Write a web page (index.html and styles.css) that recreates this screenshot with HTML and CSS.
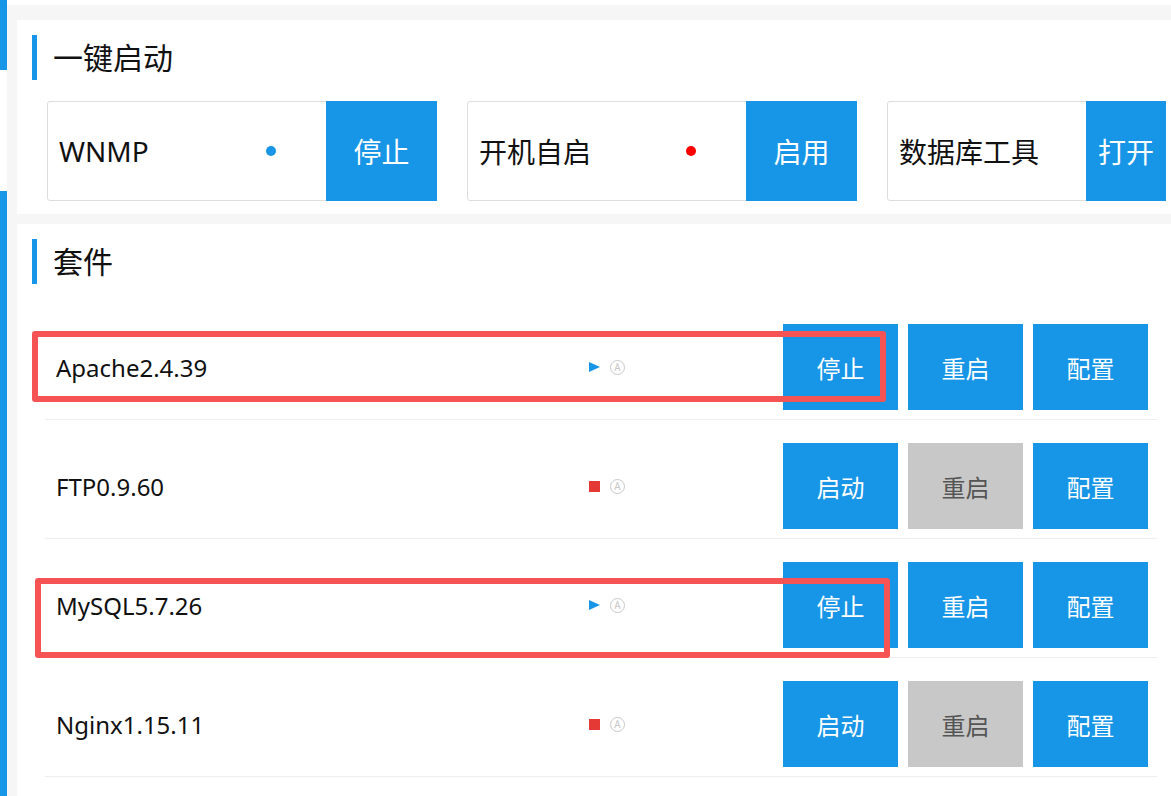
FILE: index.html
```html
<!DOCTYPE html>
<html lang="zh-CN">
<head>
<meta charset="utf-8">
<title>WNMP</title>
<link rel="stylesheet" href="styles.css">
</head>
<body>
<div class="sidebar">
  <div class="side-active side-top"></div>
  <div class="side-gap"></div>
  <div class="side-active side-rest"></div>
</div>
<main class="main">
  <section class="panel panel-quick">
    <h2 class="panel-title">一键启动</h2>
    <div class="cards">
      <div class="card">
        <span class="card-label">WNMP</span>
        <span class="dot dot-on"></span>
        <button class="card-btn">停止</button>
      </div>
      <div class="card">
        <span class="card-label">开机自启</span>
        <span class="dot dot-off"></span>
        <button class="card-btn">启用</button>
      </div>
      <div class="card card-narrow">
        <span class="card-label">数据库工具</span>
        <button class="card-btn card-btn-narrow">打开</button>
      </div>
    </div>
  </section>
  <section class="panel panel-suite">
    <h2 class="panel-title">套件</h2>
    <div class="rows">
      <div class="row">
        <span class="name">Apache2.4.39</span>
        <span class="st st-run"></span>
        <span class="auto">A</span>
        <div class="actions">
          <button class="btn">停止</button>
          <button class="btn">重启</button>
          <button class="btn">配置</button>
        </div>
        <div class="mark mark-1"></div>
      </div>
      <div class="row">
        <span class="name">FTP0.9.60</span>
        <span class="st st-stop"></span>
        <span class="auto">A</span>
        <div class="actions">
          <button class="btn">启动</button>
          <button class="btn btn-off">重启</button>
          <button class="btn">配置</button>
        </div>
      </div>
      <div class="row">
        <span class="name">MySQL5.7.26</span>
        <span class="st st-run"></span>
        <span class="auto">A</span>
        <div class="actions">
          <button class="btn">停止</button>
          <button class="btn">重启</button>
          <button class="btn">配置</button>
        </div>
        <div class="mark mark-2"></div>
      </div>
      <div class="row">
        <span class="name">Nginx1.15.11</span>
        <span class="st st-stop"></span>
        <span class="auto">A</span>
        <div class="actions">
          <button class="btn">启动</button>
          <button class="btn btn-off">重启</button>
          <button class="btn">配置</button>
        </div>
      </div>
    </div>
  </section>
</main>
</body>
</html>
```

FILE: styles.css
```css
html, body {
  margin: 0;
  padding: 0;
  height: 796px;
  overflow: hidden;
  background: #ffffff;
}
body {
  display: flex;
  font-family: "Noto Sans", "Noto Sans CJK SC", sans-serif;
  color: #111;
}
.sidebar {
  width: 7px;
  flex: none;
  display: flex;
  flex-direction: column;
}
.side-active { background: #1795e6; }
.side-top { height: 70px; }
.side-gap { height: 121px; background: #fff; }
.side-rest { flex: 1; }

.main {
  flex: 1;
  background: #f6f6f6;
  border-top: 5px solid #fff;
  padding: 15px 0 0 10px;
  display: flex;
  flex-direction: column;
  gap: 10px;
  min-width: 0;
}
.panel {
  background: #fff;
  padding-top: 15px;
}
.panel-quick {
  height: 179px;
}
.panel-suite {
  flex: 1;
}
.panel-title {
  margin: 0 0 0 15px;
  height: 45px;
  border-left: 5px solid #1795e6;
  padding-left: 16px;
  font-weight: normal;
  font-size: 30px;
  line-height: 45px;
  color: #111;
}
.cards {
  display: flex;
  gap: 30px;
  margin: 21px 0 0 30px;
}
.card {
  box-sizing: border-box;
  width: 390px;
  height: 100px;
  flex: none;
  border: 1px solid #dddddd;
  border-radius: 3px;
  display: flex;
  align-items: center;
  padding-left: 11px;
}
.card-narrow {
  width: 279px;
}
.card-label {
  font-size: 28px;
  flex: 1;
  white-space: nowrap;
}
.dot {
  width: 10px;
  height: 10px;
  border-radius: 50%;
  margin-right: 50px;
}
.dot-on { background: #1795e6; }
.dot-off { background: #ff0000; }
.card-btn {
  width: 111px;
  height: 100px;
  margin: -1px -1px -1px 0;
  border: 0;
  background: #1795e6;
  color: #fff;
  font-family: inherit;
  font-size: 28px;
  padding: 0;
  flex: none;
}
.card-btn-narrow { width: 80px; }

.rows {
  margin: 17px 14px 0 28px;
}
.row {
  position: relative;
  display: flex;
  align-items: center;
  padding: 23px 9px 9px 11px;
  border-bottom: 1px solid #eeeeee;
}
.name {
  width: 533px;
  flex: none;
  font-size: 24px;
  color: #111;
}
.st {
  width: 11px;
  height: 11px;
  flex: none;
  margin-right: 10px;
}
.st-run {
  width: 0;
  height: 0;
  border-left: 11px solid #1795e6;
  border-top: 5.5px solid transparent;
  border-bottom: 5.5px solid transparent;
}
.st-stop {
  background: #e53935;
}
.auto {
  width: 13px;
  height: 13px;
  border: 1px solid #c8c8c8;
  border-radius: 50%;
  color: #c8c8c8;
  font-size: 10px;
  line-height: 13px;
  text-align: center;
  flex: none;
}
.actions {
  margin-left: auto;
  display: flex;
  gap: 10px;
}
.btn {
  width: 115px;
  height: 86px;
  border: 0;
  padding: 0;
  background: #1795e6;
  color: #fff;
  font-family: inherit;
  font-size: 24px;
}
.btn-off {
  background: #c8c8c8;
  color: #555;
}
.mark {
  position: absolute;
  border: 6px solid #f65354;
  border-radius: 3px;
  box-sizing: border-box;
  pointer-events: none;
}
.mark-1 {
  left: -13px;
  top: 30px;
  width: 854px;
  height: 71px;
}
.mark-2 {
  left: -10px;
  top: 39px;
  width: 855px;
  height: 80px;
}
```
